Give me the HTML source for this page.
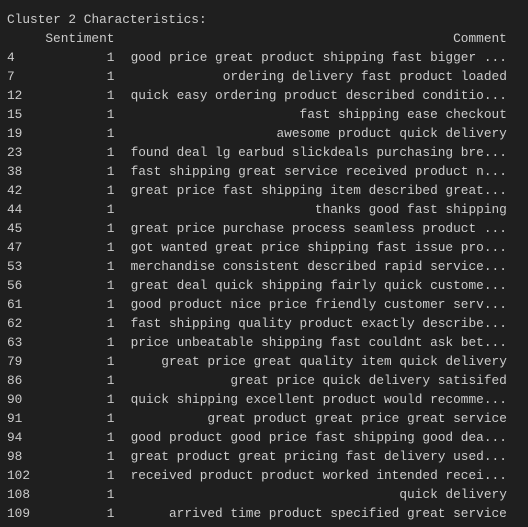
<!DOCTYPE html>
<html><head><meta charset="utf-8"><style>
html,body{margin:0;padding:0;background:#1f1f1f;width:528px;height:527px;overflow:hidden}
.w{position:absolute;left:7px;top:10px;font-family:"Liberation Mono",monospace;font-size:12.8px;line-height:19px;color:#cccccc}
.r{display:flex;height:19px;white-space:pre}
.i{width:30.7px}
.s{width:76.8px;text-align:right}
.c{width:377px;margin-left:15.4px;text-align:right}
</style></head><body><div class="w">
<div class="r">Cluster 2 Characteristics:</div>
<div class="r"><span class="i"></span><span class="s">Sentiment</span><span class="c">Comment</span></div>
<div class="r"><span class="i">4</span><span class="s">1</span><span class="c">good price great product shipping fast bigger ...</span></div>
<div class="r"><span class="i">7</span><span class="s">1</span><span class="c">ordering delivery fast product loaded</span></div>
<div class="r"><span class="i">12</span><span class="s">1</span><span class="c">quick easy ordering product described conditio...</span></div>
<div class="r"><span class="i">15</span><span class="s">1</span><span class="c">fast shipping ease checkout</span></div>
<div class="r"><span class="i">19</span><span class="s">1</span><span class="c">awesome product quick delivery</span></div>
<div class="r"><span class="i">23</span><span class="s">1</span><span class="c">found deal lg earbud slickdeals purchasing bre...</span></div>
<div class="r"><span class="i">38</span><span class="s">1</span><span class="c">fast shipping great service received product n...</span></div>
<div class="r"><span class="i">42</span><span class="s">1</span><span class="c">great price fast shipping item described great...</span></div>
<div class="r"><span class="i">44</span><span class="s">1</span><span class="c">thanks good fast shipping</span></div>
<div class="r"><span class="i">45</span><span class="s">1</span><span class="c">great price purchase process seamless product ...</span></div>
<div class="r"><span class="i">47</span><span class="s">1</span><span class="c">got wanted great price shipping fast issue pro...</span></div>
<div class="r"><span class="i">53</span><span class="s">1</span><span class="c">merchandise consistent described rapid service...</span></div>
<div class="r"><span class="i">56</span><span class="s">1</span><span class="c">great deal quick shipping fairly quick custome...</span></div>
<div class="r"><span class="i">61</span><span class="s">1</span><span class="c">good product nice price friendly customer serv...</span></div>
<div class="r"><span class="i">62</span><span class="s">1</span><span class="c">fast shipping quality product exactly describe...</span></div>
<div class="r"><span class="i">63</span><span class="s">1</span><span class="c">price unbeatable shipping fast couldnt ask bet...</span></div>
<div class="r"><span class="i">79</span><span class="s">1</span><span class="c">great price great quality item quick delivery</span></div>
<div class="r"><span class="i">86</span><span class="s">1</span><span class="c">great price quick delivery satisifed</span></div>
<div class="r"><span class="i">90</span><span class="s">1</span><span class="c">quick shipping excellent product would recomme...</span></div>
<div class="r"><span class="i">91</span><span class="s">1</span><span class="c">great product great price great service</span></div>
<div class="r"><span class="i">94</span><span class="s">1</span><span class="c">good product good price fast shipping good dea...</span></div>
<div class="r"><span class="i">98</span><span class="s">1</span><span class="c">great product great pricing fast delivery used...</span></div>
<div class="r"><span class="i">102</span><span class="s">1</span><span class="c">received product product worked intended recei...</span></div>
<div class="r"><span class="i">108</span><span class="s">1</span><span class="c">quick delivery</span></div>
<div class="r"><span class="i">109</span><span class="s">1</span><span class="c">arrived time product specified great service</span></div>
</div></body></html>
